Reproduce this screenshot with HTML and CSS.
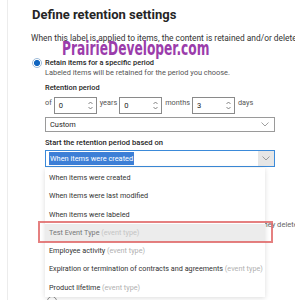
FILE: index.html
```html
<!DOCTYPE html>
<html lang="en">
<head>
<meta charset="UTF-8">
<meta name="viewport" content="width=device-width, initial-scale=1.0">
<title>Define retention settings</title>
<link rel="stylesheet" href="styles.css">
</head>
<body>

<div class="page">
  <h1 class="title">Define retention settings</h1>
  <p class="desc">When this label is applied to items, the content is retained and/or deleted based on the settings you choose here.</p>
  <div class="watermark">PrairieDeveloper.com</div>

  <div class="option">
    <span class="radio checked"></span>
    <div>
      <div class="option-label">Retain items for a specific period</div>
      <div class="option-sub">Labeled items will be retained for the period you choose.</div>
    </div>
  </div>

  <div class="section">
    <div class="field-label first">Retention period</div>
    <div class="period-row">
      <span class="unit of">of</span>
      <span class="spin"><span class="spin-val">0</span>
        <svg class="arrows" width="5" height="9" viewBox="0 0 5 9"><path d="M0.5 3 L2.5 1 L4.5 3 M0.5 6 L2.5 8 L4.5 6" fill="none" stroke="#666" stroke-width="0.8"/></svg>
      </span>
      <span class="unit">years</span>
      <span class="spin"><span class="spin-val">0</span>
        <svg class="arrows" width="5" height="9" viewBox="0 0 5 9"><path d="M0.5 3 L2.5 1 L4.5 3 M0.5 6 L2.5 8 L4.5 6" fill="none" stroke="#666" stroke-width="0.8"/></svg>
      </span>
      <span class="unit">months</span>
      <span class="spin"><span class="spin-val">3</span>
        <svg class="arrows" width="5" height="9" viewBox="0 0 5 9"><path d="M0.5 3 L2.5 1 L4.5 3 M0.5 6 L2.5 8 L4.5 6" fill="none" stroke="#666" stroke-width="0.8"/></svg>
      </span>
      <span class="unit">days</span>
    </div>

    <div class="select">
      <span>Custom</span>
      <svg class="chev" width="8" height="5" viewBox="0 0 8 5"><path d="M0.5 0.5 L4 4 L7.5 0.5" fill="none" stroke="#888" stroke-width="0.8"/></svg>
    </div>

    <div class="field-label">Start the retention period based on</div>
    <div class="combo">
      <div class="select focused">
        <span class="sel-text">When items were created</span>
        <span class="chev-box">
          <svg class="chev" width="8" height="5" viewBox="0 0 8 5"><path d="M0.5 0.5 L4 4 L7.5 0.5" fill="none" stroke="#888" stroke-width="0.8"/></svg>
        </span>
      </div>
      <div class="menu">
        <div class="menu-item">When items were created</div>
        <div class="menu-item">When items were last modified</div>
        <div class="menu-item">When items were labeled</div>
        <div class="menu-item hover">Test Event Type <span class="tag">(event type)</span><span class="mark"></span></div>
        <div class="menu-item">Employee activity <span class="tag">(event type)</span></div>
        <div class="menu-item">Expiration or termination of contracts and agreements <span class="tag">(event type)</span></div>
        <div class="menu-item">Product lifetime <span class="tag">(event type)</span></div>
      </div>
    </div>

    <div class="under">
      <div class="under-note">they delete</div>
      <span class="radio"></span>
    </div>
  </div>
</div>

</body>
</html>
```

FILE: styles.css
```css
body {
  margin: 0;
  font-family: Roboto, "Liberation Sans", sans-serif;
  color: #252525;
  background: #fff;
  overflow: hidden;
}
.page {
  position: relative;
  margin-left: 7px;
  padding-left: 24px;
  border-left: 1px solid #ececec;
  height: 300px;
  overflow: hidden;
}
.title {
  margin: 0;
  padding-top: 7px;
  font-size: 13px;
  font-weight: 700;
  line-height: 16px;
  white-space: nowrap;
}
.desc {
  margin: 9px 0 0 -1px;
  font-size: 8.4px;
  line-height: 12px;
  color: #333;
  white-space: nowrap;
}
.watermark {
  position: absolute;
  left: 54px;
  top: 36px;
  font-family: "DejaVu Sans Condensed", "DejaVu Sans", sans-serif;
  font-stretch: condensed;
  font-weight: 700;
  font-size: 20px;
  line-height: 24px;
  color: #9b3cab;
  transform-origin: left top;
  transform: scaleX(0.68);
  white-space: nowrap;
}
.option {
  display: flex;
  gap: 3px;
  margin-top: 13px;
}
.radio {
  display: block;
  box-sizing: border-box;
  width: 10px;
  height: 10px;
  margin-top: 1px;
  border: 1px solid #8a8a8a;
  border-radius: 50%;
  flex-shrink: 0;
}
.radio.checked {
  border-color: #9fbbd8;
  background: radial-gradient(circle, #1065c0 0 2.8px, #fff 3.2px);
}
.option-label {
  font-size: 7.4px;
  font-weight: 500;
  line-height: 11px;
  white-space: nowrap;
}
.option-sub {
  font-size: 7.4px;
  line-height: 10px;
  color: #555;
  white-space: nowrap;
}
.section {
  margin-left: 13px;
}
.field-label {
  margin-top: 5px;
  font-size: 7.6px;
  font-weight: 500;
  line-height: 12px;
  white-space: nowrap;
}
.field-label.first {
  margin-top: 4px;
  font-size: 7.4px;
}
.period-row {
  display: flex;
  align-items: flex-start;
  margin-top: 3px;
  height: 17px;
}
.unit {
  font-size: 7.3px;
  line-height: 10px;
  color: #555;
  padding: 1px 2px 0 3px;
}
.unit.of {
  padding-left: 0;
  padding-right: 2px;
}
.spin {
  display: flex;
  align-items: center;
  justify-content: space-between;
  box-sizing: border-box;
  width: 43px;
  height: 17px;
  border: 1px solid #8a8a8a;
  padding: 0 3px 0 4px;
  font-size: 7.6px;
}
.select {
  display: flex;
  align-items: center;
  justify-content: space-between;
  box-sizing: border-box;
  width: 230px;
  height: 15px;
  margin-top: 3px;
  border: 1px solid #9a9a9a;
  padding: 0 5px 0 4px;
  font-size: 7.4px;
}
.combo {
  position: relative;
  margin-top: 1px;
}
.select.focused {
  margin-top: 0;
  height: 17px;
  border-color: #3b8ad9;
  padding: 0 0 0 3px;
}
.sel-text {
  background: #3d7fd6;
  color: #fff;
  padding: 1px 1px;
  line-height: 11px;
}
.chev-box {
  display: flex;
  align-items: center;
  justify-content: center;
  width: 16px;
  height: 100%;
  background: #e6e6e6;
}
.menu {
  position: absolute;
  left: 0;
  top: 18px;
  width: 220px;
  padding-top: 1px;
  background: #fff;
  box-shadow: 0 1px 5px rgba(0, 0, 0, 0.14);
  z-index: 2;
}
.menu-item {
  position: relative;
  height: 18.3px;
  line-height: 18.3px;
  padding-left: 4px;
  font-size: 7.25px;
  color: #333;
  white-space: nowrap;
}
.menu-item .tag {
  color: #b0b0b0;
}
.menu-item.hover {
  background: #ececec;
  color: #777;
}
.menu-item.hover .tag {
  color: #c4c4c4;
}
.mark {
  position: absolute;
  left: -7px;
  right: -8px;
  top: -3px;
  bottom: -1px;
  border: 2px solid rgba(222, 96, 96, 0.8);
}
.under {
  position: relative;
}
.under-note {
  margin-top: 52px;
  padding-left: 216px;
  font-size: 7.6px;
  line-height: 11px;
  color: #666;
  white-space: nowrap;
}
.under .radio {
  margin-top: 66px;
  margin-left: 2px;
}
```
